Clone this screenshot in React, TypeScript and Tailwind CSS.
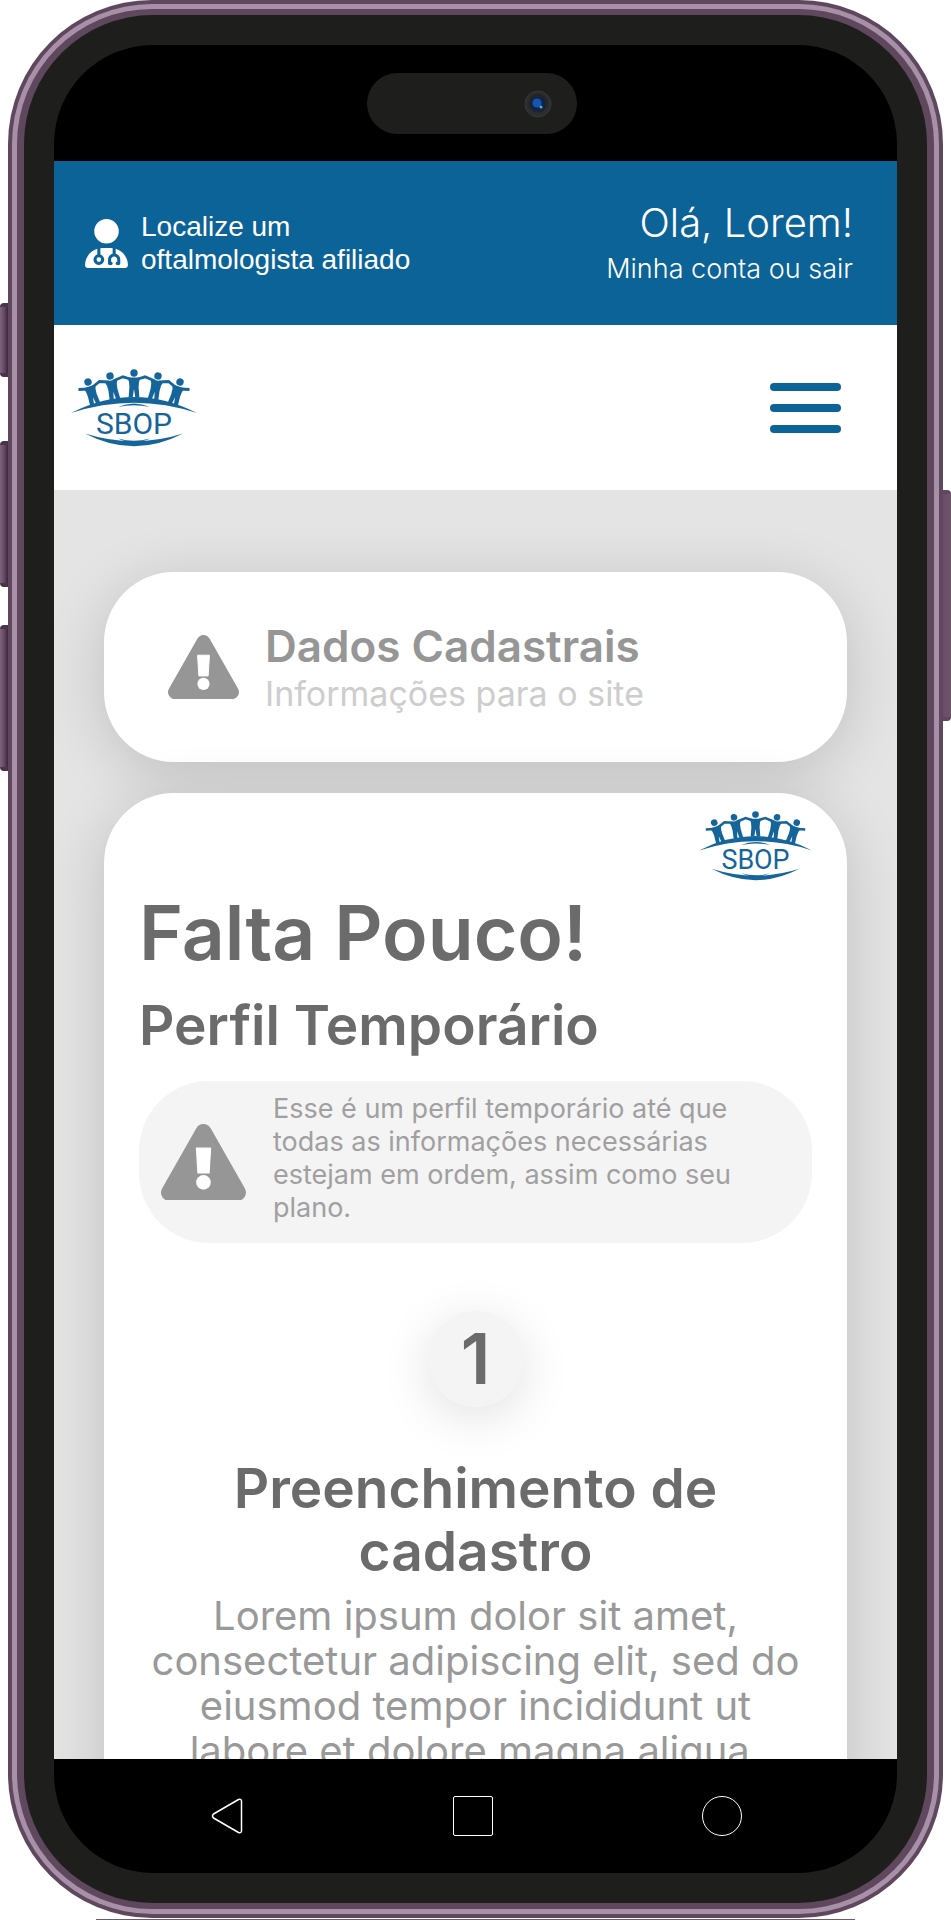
import React from 'react';
import { FaUserDoctor } from 'react-icons/fa6';

const LOGO_PEOPLE = [
  { x: 17, y: 13, tilt: -18 },
  { x: 39, y: 7, tilt: -12 },
  { x: 63, y: 4, tilt: 0 },
  { x: 87, y: 7, tilt: 12 },
  { x: 109, y: 13, tilt: 18 },
];

const SbopLogo: React.FC<{ className?: string }> = ({ className }) => (
  <svg viewBox="0 0 126 78" className={className} fill="#15659b" role="img" aria-label="SBOP">
    {LOGO_PEOPLE.map((person) => (
      <g key={person.x} transform={`translate(${person.x} ${person.y}) rotate(${person.tilt})`}>
        <circle r="3.7" />
        <path d="M-6.5 4.6 6.5 4.6 5 9 4.6 14 5.4 24.5 1.3 24.5 0 16 -1.3 24.5 -5.4 24.5 -4.6 14 -5 9Z" />
      </g>
    ))}
    <path
      d="M7.5 20.5 17 20M21 18.5 28.5 12.5 38 13M42 12 52 7.8 59 10M67 10 74 7.8 84 12M88 13 97.5 12.5 105 18.5M109 20 118.5 20.5"
      fill="none"
      stroke="#15659b"
      strokeWidth="2.8"
    />
    <path d="M0 44Q63 12 126 44Q63 23.4 0 44Z" />
    <path d="M47 38Q63 31 79 38Q63 34.5 47 38Z" />
    <path d="M14 64.5Q63 90 112 64.5Q63 80 14 64.5Z" />
    <path d="M47 69.5Q63 77 79 69.5Q63 74 47 69.5Z" />
    <text x="63" y="64.5" textAnchor="middle" fontSize="30" fontFamily="Roboto, sans-serif">
      SBOP
    </text>
  </svg>
);

const WarningIcon: React.FC<{ className?: string }> = ({ className }) => (
  <svg viewBox="0 0 72 65" className={className} aria-hidden="true">
    <path d="M36 7 7 58H65Z" fill="#969696" stroke="#969696" strokeWidth="14" strokeLinejoin="round" />
    <path d="M30 20.5H42L40.7 41.5H31.3Z" fill="#fff" stroke="#fff" strokeLinejoin="round" />
    <circle cx="36" cy="49.5" r="6.2" fill="#fff" />
  </svg>
);

const SideButton: React.FC<{ className: string }> = ({ className }) => (
  <div className={`w-full rounded-l-sm border-y-4 border-[#4a344a] bg-linear-to-r from-[#75697a] via-[#6b4766] to-[#3d273d] ${className}`} />
);

export default function App() {
  return (
    <div className="flex h-screen flex-col bg-white font-[Inter,'Open_Sans',sans-serif]">
      <div className="flex min-h-0 flex-1">
        <div className="w-2 shrink-0 pt-[303px]">
          <SideButton className="h-[74px]" />
          <SideButton className="mt-16 h-[146px]" />
          <SideButton className="mt-[38px] h-[146px]" />
        </div>

        {/* Phone shell: three metal rings, then the bezel */}
        <div className="mb-px min-w-0 flex-1 rounded-[144px] bg-[#5f485d] p-1">
          <div className="h-full rounded-[140px] bg-[#a891a8] p-[5px]">
            <div className="h-full rounded-[135px] bg-[#5f485d] px-[7px] py-1.5">
              <div className="h-full rounded-[129px] bg-[#1e1e1c] p-[30px]">
                <div className="flex h-full flex-col overflow-hidden rounded-[99px] bg-black">
                  <div className="flex h-[116px] shrink-0 items-start justify-center pr-2 pt-7">
                    <div className="flex h-[61px] w-[210px] items-center justify-end rounded-full bg-[#1e1e1c] pr-[25px]">
                      <svg viewBox="0 0 28 28" className="size-7" aria-hidden="true">
                        <circle cx="14" cy="14" r="13" fill="#2b2d2e" stroke="#36393a" />
                        <circle cx="14" cy="13" r="9.5" fill="#222426" />
                        <circle cx="14" cy="14" r="7" fill="#0a2554" />
                        <circle cx="13" cy="13" r="4.5" fill="#1657ad" />
                        <circle cx="17" cy="17" r="1.5" fill="#65a9b5" />
                      </svg>
                    </div>
                  </div>

                  <header className="shrink-0">
                    <div className="flex h-[164px] items-center justify-between bg-[#0c6398] pl-[31px] pr-11 text-white">
                      <a href="#localizar" className="flex items-center gap-[13px] font-['Liberation_Sans',Arial,sans-serif] text-[28px] leading-[33px]">
                        <FaUserDoctor className="h-[49px] w-[43px]" />
                        <span>
                          Localize um
                          <br />
                          oftalmologista afiliado
                        </span>
                      </a>
                      <div className="pt-1 text-right font-light">
                        <p className="text-[40px] leading-[48px]">Olá, Lorem!</p>
                        <p className="text-[27px] leading-[44px]">
                          <a href="#conta">Minha conta</a> ou <a href="#sair">sair</a>
                        </p>
                      </div>
                    </div>
                    <div className="flex h-[165px] items-center justify-between bg-white pl-[17px] pr-14">
                      <a href="#inicio">
                        <SbopLogo className="w-[126px]" />
                      </a>
                      <button type="button" aria-label="Abrir menu" className="flex flex-col gap-[13px]">
                        <span className="h-2 w-[71px] rounded-full bg-[#0c6398]" />
                        <span className="h-2 w-[71px] rounded-full bg-[#0c6398]" />
                        <span className="h-2 w-[71px] rounded-full bg-[#0c6398]" />
                      </button>
                    </div>
                  </header>

                  <main className="min-h-0 flex-1 overflow-hidden bg-[#e4e4e4] px-[50px] pt-[82px]">
                    <section className="flex h-[190px] items-center gap-[26px] rounded-[70px] bg-white pl-16 shadow-[0_10px_60px_rgba(0,0,0,0.16)]">
                      <WarningIcon className="w-[71px] shrink-0" />
                      <div className="pt-0.5">
                        <h2 className="text-[44px] font-semibold leading-[52px] text-[#969696]">Dados Cadastrais</h2>
                        <p className="text-[34px] leading-[44px] text-[#cdcdcd]">Informações para o site</p>
                      </div>
                    </section>

                    <section className="mt-[31px] rounded-[70px] bg-white px-[35px] pb-20 pt-[18px] shadow-[0_10px_60px_rgba(0,0,0,0.16)]">
                      <div className="flex justify-end">
                        <SbopLogo className="w-[113px]" />
                      </div>
                      <h1 className="mt-3 text-[75px] font-semibold leading-[80px] text-[#6b6b6b]">Falta Pouco!</h1>
                      <h2 className="mt-5 text-[55px] font-semibold leading-[64px] text-[#6b6b6b]">Perfil Temporário</h2>

                      <div className="mt-6 flex items-center gap-[27px] rounded-[70px] bg-[#f4f4f4] py-[11px] pl-[22px] pr-10">
                        <WarningIcon className="w-[85px] shrink-0" />
                        <p className="pb-2 text-[27px] leading-[33px] text-[#a0a0a0]">
                          Esse é um perfil temporário até que todas as informações necessárias estejam em ordem, assim como seu plano.
                        </p>
                      </div>

                      <div className="mt-[68px] flex flex-col items-center text-center">
                        <span className="flex size-24 items-center justify-center rounded-full bg-[#f4f4f4] text-[70px] font-semibold text-[#6b6b6b] shadow-[0_10px_50px_rgba(0,0,0,0.12)]">
                          1
                        </span>
                        <h2 className="mt-[50px] text-[55px] font-semibold leading-[63px] text-[#6b6b6b]">
                          Preenchimento de
                          <br />
                          cadastro
                        </h2>
                        <p className="mt-2.5 text-[40px] leading-[45px] text-[#999999]">
                          Lorem ipsum dolor sit amet,
                          <br />
                          consectetur adipiscing elit, sed do
                          <br />
                          eiusmod tempor incididunt ut
                          <br />
                          labore et dolore magna aliqua.
                        </p>
                      </div>
                    </section>
                  </main>

                  <nav className="flex h-[114px] shrink-0 items-center justify-between pl-[157px] pr-[155px]">
                    <button type="button" aria-label="Voltar">
                      <svg viewBox="0 0 32 36" className="h-9 w-8" fill="none" stroke="white" strokeWidth="1.5" strokeLinejoin="round">
                        <path d="M27.5 1.5 2.5 16Q.5 18 2.5 20L27.5 34.5Q30.5 35.5 30.5 32.5V3.5Q30.5 .5 27.5 1.5Z" />
                      </svg>
                    </button>
                    <button type="button" aria-label="Recentes" className="size-10 rounded-xs border border-white" />
                    <button type="button" aria-label="Início" className="size-10 rounded-full border border-white" />
                  </nav>
                </div>
              </div>
            </div>
          </div>
        </div>

        <div className="w-2 shrink-0 pt-[490px]">
          <div className="h-[231px] rounded-r-sm border-y-4 border-[#5f485d] bg-linear-to-r from-[#70496b] to-[#685766]" />
        </div>
      </div>
      <div className="mx-24 h-px bg-[#6d5a6b]" />
    </div>
  );
}
